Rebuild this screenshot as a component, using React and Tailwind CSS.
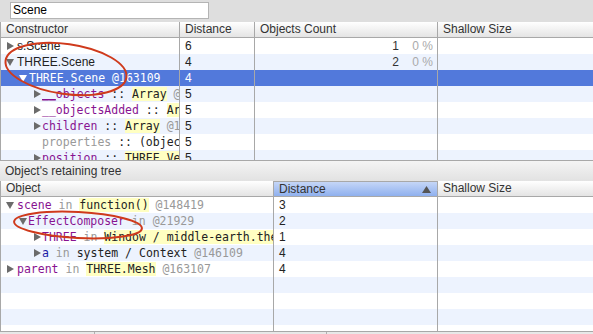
import React from "react";

const sans = { fontFamily: '"Liberation Sans", Arial, sans-serif' };
const mono = { fontFamily: '"DejaVu Sans Mono", monospace' };

function Tri({ open, white }) {
  return (
    <svg width="8" height="8" viewBox="0 0 8 8" className="shrink-0">
      {open ? (
        <polygon points="0,1 8,1 4,8" fill={white ? "#ffffff" : "#6b6b6b"} />
      ) : (
        <polygon points="1,0 8,4 1,8" fill="#6b6b6b" />
      )}
    </svg>
  );
}

const P = ({ children }) => <span className="text-[#881391]">{children}</span>;
const G = ({ children }) => <span className="text-[#999]">{children}</span>;
const Y = ({ children }) => <span className="bg-[#ffffc2] text-[#222]">{children}</span>;
const D = ({ children }) => <span className="text-[#222]">{children}</span>;

function TreeCell({ w, pl, tri, open, white, gap, children, isMono }) {
  return (
    <div
      className="flex items-center overflow-hidden whitespace-nowrap border-r border-[#a8a8a8] h-full shrink-0"
      style={{ width: w, paddingLeft: pl }}
    >
      {tri ? <Tri open={open} white={white} /> : null}
      <span
        className="text-[11.5px] leading-[16px]"
        style={{ ...(isMono ? mono : sans), marginLeft: gap, fontSize: isMono ? "11.5px" : "12px" }}
      >
        {children}
      </span>
    </div>
  );
}

function Header({ cols }) {
  return (
    <div className="flex h-[16px] border-b border-[#a8a8a8] bg-gradient-to-b from-white to-[#e4e4e4] text-[12px] leading-[15px] text-[#333] shrink-0" style={sans}>
      {cols.map((c, i) => (
        <div
          key={i}
          className={`relative h-full pl-[5px] shrink-0 ${i < cols.length - 1 ? "border-r border-[#a8a8a8]" : "grow"} ${c.sorted ? "bg-gradient-to-b from-[#c5d6f7] to-[#8fb0ee] border-t border-[#7a9be0]" : ""}`}
          style={c.w ? { width: c.w } : {}}
        >
          {c.label}
          {c.sorted ? (
            <span className="absolute right-[6px] top-[4px]">
              <svg width="9" height="7" viewBox="0 0 9 7">
                <polygon points="4.5,0 9,7 0,7" fill="#555" />
              </svg>
            </span>
          ) : null}
        </div>
      ))}
    </div>
  );
}

export default function App() {
  const topRows = [
    { pl: 5, tri: true, open: false, gap: 3, dist: "6", count: "1", pct: "0 %", content: <span className="text-[#222]">s.Scene</span> },
    { pl: 5, tri: true, open: true, gap: 3, dist: "4", count: "2", pct: "0 %", content: <span className="text-[#222]">THREE.Scene</span> },
    { pl: 18, tri: true, open: true, gap: 2, dist: "4", sel: true, mono: true, content: <span className="text-white">THREE.Scene @163109</span> },
    { pl: 32, tri: true, open: false, gap: 1, dist: "5", mono: true, content: <><P><span className="underline">__</span>objects</P><D> :: </D><Y>Array</Y><G> @163111</G></> },
    { pl: 32, tri: true, open: false, gap: 1, dist: "5", mono: true, content: <><P>__objectsAdded</P><D> :: </D><Y>Array</Y><G> @163113</G></> },
    { pl: 32, tri: true, open: false, gap: 1, dist: "5", mono: true, content: <><P>children</P><D> :: </D><Y>Array</Y><G> @163115</G></> },
    { pl: 41, tri: false, gap: 0, dist: "5", mono: true, content: <><G>properties</G><D> :: (object)</D></> },
    { pl: 32, tri: true, open: false, gap: 1, dist: "5", mono: true, content: <><P>position</P><D> :: </D><Y>THREE.Vector3</Y></> },
  ];

  const botRows = [
    { pl: 5, open: true, gap: 3, dist: "3", content: <><P>scene</P><G> in </G><Y>function()</Y><G> @148419</G></> },
    { pl: 18, open: true, gap: 1, dist: "2", content: <><P>EffectComposer</P><G> in </G><G>@21929</G></> },
    { pl: 32, open: false, gap: 1, dist: "1", content: <><P>THREE</P><G> in </G><Y>Window / middle-earth.thehobbit.com</Y></> },
    { pl: 32, open: false, gap: 1, dist: "4", content: <><span className="text-[#1a1aa6]">a</span><G> in </G><D>system / Context</D><G> @146109</G></> },
    { pl: 5, open: false, gap: 3, dist: "4", content: <><P>parent</P><G> in </G><Y>THREE.Mesh</Y><G> @163107</G></> },
    {}, {}, {}, {},
  ];

  return (
    <div className="relative w-[593px] h-[334px] overflow-hidden bg-white flex flex-col" style={sans}>
      {/* search bar */}
      <div className="h-[22px] bg-[#dedede] flex items-start pt-[2px] pl-[10px] shrink-0">
        <div className="w-[199px] h-[17px] bg-white border border-[#b4b4b4] text-[12px] leading-[15px] pl-[2px] text-black" style={sans}>
          Scene
        </div>
      </div>

      {/* top table */}
      <div className="border-l border-[#a8a8a8] flex flex-col shrink-0">
        <Header cols={[{ label: "Constructor", w: 179 }, { label: "Distance", w: 75 }, { label: "Objects Count", w: 183 }, { label: "Shallow Size" }]} />
        <div className="h-[122px] overflow-hidden flex flex-col">
          {topRows.map((r, i) => (
            <div
              key={i}
              className={`flex h-[16px] shrink-0 ${r.sel ? "bg-[#5279db]" : i % 2 ? "bg-[#edf3fe]" : "bg-white"}`}
            >
              <TreeCell w={179} pl={r.pl} tri={r.tri} open={r.open} white={r.sel} gap={r.gap} isMono={r.mono}>
                {r.content}
              </TreeCell>
              <div className={`w-[75px] h-full shrink-0 border-r border-[#a8a8a8] pl-[5px] text-[12px] leading-[16px] ${r.sel ? "text-white" : "text-[#222]"}`}>
                {r.dist}
              </div>
              <div className="w-[183px] h-full shrink-0 border-r border-[#a8a8a8] flex items-center justify-end pr-[4px] text-[12px] leading-[16px]">
                {r.count ? (
                  <>
                    <span className="text-[#333]">{r.count}</span>
                    <span className="text-[#aaa] w-[34px] text-right">{r.pct}</span>
                  </>
                ) : null}
              </div>
              <div className="grow h-full" />
            </div>
          ))}
        </div>
      </div>

      {/* section title */}
      <div className="h-[21px] shrink-0 border-t border-[#a8a8a8] bg-gradient-to-b from-[#f4f4f4] to-[#e2e2e2] text-[12px] leading-[20px] pl-[5px] text-[#333]">
        Object's retaining tree
      </div>

      {/* bottom table */}
      <div className="border-l border-[#a8a8a8] flex flex-col grow overflow-hidden">
        <Header cols={[{ label: "Object", w: 273 }, { label: "Distance", w: 164, sorted: true }, { label: "Shallow Size" }]} />
        <div className="flex flex-col grow overflow-hidden">
          {botRows.map((r, i) => (
            <div key={i} className={`flex h-[16px] shrink-0 ${i % 2 ? "bg-[#edf3fe]" : "bg-white"}`}>
              {r.content ? (
                <TreeCell w={273} pl={r.pl} tri open={r.open} gap={r.gap} isMono>
                  {r.content}
                </TreeCell>
              ) : (
                <div className="w-[273px] h-full shrink-0 border-r border-[#a8a8a8]" />
              )}
              <div className="w-[164px] h-full shrink-0 border-r border-[#a8a8a8] pl-[5px] text-[12px] leading-[16px] text-[#222]">
                {r.dist}
              </div>
              <div className="grow h-full" />
            </div>
          ))}
        </div>
      </div>
      <div className="h-[3px] shrink-0 border-t border-[#a8a8a8] bg-[#e8e8e8] flex">
        <div className="w-[95px] border-r border-[#b0b0b0]" />
        <div className="w-[232px] border-r border-[#b0b0b0]" />
      </div>

      {/* red annotation ellipses */}
      <svg className="absolute left-0 top-0 pointer-events-none" width="593" height="334">
        <ellipse cx="66" cy="69" rx="61" ry="25" transform="rotate(8 66 69)" fill="none" stroke="#cf3a1c" strokeWidth="2" />
        <ellipse cx="78" cy="225" rx="64" ry="13" transform="rotate(3 78 225)" fill="none" stroke="#cf3a1c" strokeWidth="2" />
      </svg>
    </div>
  );
}
